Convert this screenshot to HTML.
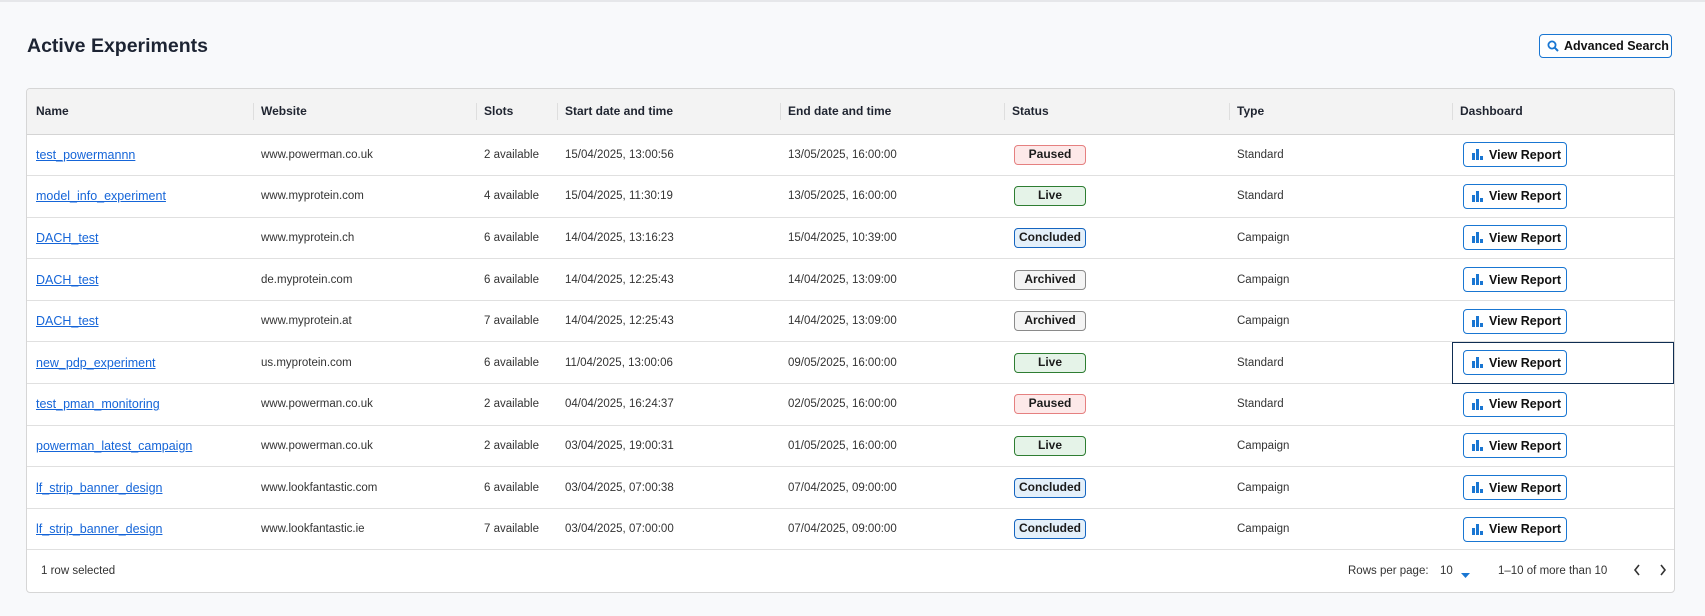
<!DOCTYPE html>
<html><head><meta charset="utf-8"><style>
*{box-sizing:border-box;margin:0;padding:0}
body{width:1705px;height:616px;background:#f8f9fb;font-family:"Liberation Sans",sans-serif;color:#1f2430;position:relative;overflow:hidden}
.topline{position:absolute;left:0;top:0;width:1705px;height:2px;background:#e6e7ea}
h1{position:absolute;left:27px;top:35px;font-size:19.5px;font-weight:600;color:#1d2433}
.adv{position:absolute;left:1539px;top:34px;width:133px;height:24px;border:1.5px solid #1976d2;border-radius:4px;background:#fff;font-size:12.5px;font-weight:bold;display:flex;align-items:center;padding-left:7px;gap:5px;color:#111;white-space:nowrap}
.card{position:absolute;left:26px;top:88px;width:1649px;height:505px;background:#fff;border:1px solid #d6d6d6;border-radius:4px;overflow:hidden}
table{border-collapse:collapse;table-layout:fixed;width:1647px}
th{height:45px;background:#f3f3f3;text-align:left;font-size:12px;font-weight:bold;padding-left:8px;position:relative;border-bottom:1px solid #d4d4d4;color:#1f2430}
th+th:before{content:"";position:absolute;left:0;top:14px;height:17px;width:1px;background:#dedede}
td{height:41.6px;font-size:11.5px;padding-left:8px;border-bottom:1px solid #e0e0e0;color:#333;white-space:nowrap}
th:first-child,td:first-child{padding-left:9px}
td a{color:#1565d8;text-decoration:underline;font-size:12.5px}
.b{display:inline-block;width:72px;height:20px;border-radius:4px;border:1.5px solid;text-align:center;font-weight:bold;font-size:12px;line-height:17px;color:#1b1b1b;margin-left:2px}
.p{background:#fde9e9;border-color:#e58080}
.l{background:#e5f3e8;border-color:#2e7d32}
.c{background:#e4f0fa;border-color:#1565c0}
.a{background:#f4f4f4;border-color:#8a8a8a}
.vr{display:inline-flex;align-items:center;gap:6px;width:104px;height:25px;border:1.5px solid #1976d2;border-radius:4px;padding-left:8px;font-size:12.5px;font-weight:bold;color:#111;margin-left:3px}
.sel{outline:1.5px solid #0f2d52;outline-offset:-1.5px}
.foot{position:absolute;left:0;top:461px;width:1647px;height:44px;font-size:11.5px;color:#333}
.foot span{position:absolute;top:15px}
</style></head><body>
<div class="topline"></div>
<h1>Active Experiments</h1>
<div class="adv"><svg width="12" height="12" viewBox="0 0 12 12"><circle cx="5" cy="5" r="3.6" fill="none" stroke="#1976d2" stroke-width="1.8"/><path d="M7.6 7.6L11 11" stroke="#1976d2" stroke-width="2"/></svg>Advanced Search</div>
<div class="card">
<table>
<colgroup><col style="width:226px"><col style="width:223px"><col style="width:81px"><col style="width:223px"><col style="width:224px"><col style="width:225px"><col style="width:223px"><col style="width:222px"></colgroup>
<tr><th>Name</th><th>Website</th><th>Slots</th><th>Start date and time</th><th>End date and time</th><th>Status</th><th>Type</th><th>Dashboard</th></tr>
<tr><td><a>test_powermannn</a></td><td>www.powerman.co.uk</td><td>2 available</td><td>15/04/2025, 13:00:56</td><td>13/05/2025, 16:00:00</td><td><span class="b p">Paused</span></td><td>Standard</td><td><span class="vr"><svg width="11" height="11"><rect x="0" y="4" width="3" height="7" fill="#1976d2"/><rect x="4" y="0" width="3" height="11" fill="#1976d2"/><rect x="8" y="7" width="3" height="4" fill="#1976d2"/></svg>View Report</span></td></tr>
<tr><td><a>model_info_experiment</a></td><td>www.myprotein.com</td><td>4 available</td><td>15/04/2025, 11:30:19</td><td>13/05/2025, 16:00:00</td><td><span class="b l">Live</span></td><td>Standard</td><td><span class="vr"><svg width="11" height="11"><rect x="0" y="4" width="3" height="7" fill="#1976d2"/><rect x="4" y="0" width="3" height="11" fill="#1976d2"/><rect x="8" y="7" width="3" height="4" fill="#1976d2"/></svg>View Report</span></td></tr>
<tr><td><a>DACH_test</a></td><td>www.myprotein.ch</td><td>6 available</td><td>14/04/2025, 13:16:23</td><td>15/04/2025, 10:39:00</td><td><span class="b c">Concluded</span></td><td>Campaign</td><td><span class="vr"><svg width="11" height="11"><rect x="0" y="4" width="3" height="7" fill="#1976d2"/><rect x="4" y="0" width="3" height="11" fill="#1976d2"/><rect x="8" y="7" width="3" height="4" fill="#1976d2"/></svg>View Report</span></td></tr>
<tr><td><a>DACH_test</a></td><td>de.myprotein.com</td><td>6 available</td><td>14/04/2025, 12:25:43</td><td>14/04/2025, 13:09:00</td><td><span class="b a">Archived</span></td><td>Campaign</td><td><span class="vr"><svg width="11" height="11"><rect x="0" y="4" width="3" height="7" fill="#1976d2"/><rect x="4" y="0" width="3" height="11" fill="#1976d2"/><rect x="8" y="7" width="3" height="4" fill="#1976d2"/></svg>View Report</span></td></tr>
<tr><td><a>DACH_test</a></td><td>www.myprotein.at</td><td>7 available</td><td>14/04/2025, 12:25:43</td><td>14/04/2025, 13:09:00</td><td><span class="b a">Archived</span></td><td>Campaign</td><td><span class="vr"><svg width="11" height="11"><rect x="0" y="4" width="3" height="7" fill="#1976d2"/><rect x="4" y="0" width="3" height="11" fill="#1976d2"/><rect x="8" y="7" width="3" height="4" fill="#1976d2"/></svg>View Report</span></td></tr>
<tr><td><a>new_pdp_experiment</a></td><td>us.myprotein.com</td><td>6 available</td><td>11/04/2025, 13:00:06</td><td>09/05/2025, 16:00:00</td><td><span class="b l">Live</span></td><td>Standard</td><td class="sel"><span class="vr"><svg width="11" height="11"><rect x="0" y="4" width="3" height="7" fill="#1976d2"/><rect x="4" y="0" width="3" height="11" fill="#1976d2"/><rect x="8" y="7" width="3" height="4" fill="#1976d2"/></svg>View Report</span></td></tr>
<tr><td><a>test_pman_monitoring</a></td><td>www.powerman.co.uk</td><td>2 available</td><td>04/04/2025, 16:24:37</td><td>02/05/2025, 16:00:00</td><td><span class="b p">Paused</span></td><td>Standard</td><td><span class="vr"><svg width="11" height="11"><rect x="0" y="4" width="3" height="7" fill="#1976d2"/><rect x="4" y="0" width="3" height="11" fill="#1976d2"/><rect x="8" y="7" width="3" height="4" fill="#1976d2"/></svg>View Report</span></td></tr>
<tr><td><a>powerman_latest_campaign</a></td><td>www.powerman.co.uk</td><td>2 available</td><td>03/04/2025, 19:00:31</td><td>01/05/2025, 16:00:00</td><td><span class="b l">Live</span></td><td>Campaign</td><td><span class="vr"><svg width="11" height="11"><rect x="0" y="4" width="3" height="7" fill="#1976d2"/><rect x="4" y="0" width="3" height="11" fill="#1976d2"/><rect x="8" y="7" width="3" height="4" fill="#1976d2"/></svg>View Report</span></td></tr>
<tr><td><a>lf_strip_banner_design</a></td><td>www.lookfantastic.com</td><td>6 available</td><td>03/04/2025, 07:00:38</td><td>07/04/2025, 09:00:00</td><td><span class="b c">Concluded</span></td><td>Campaign</td><td><span class="vr"><svg width="11" height="11"><rect x="0" y="4" width="3" height="7" fill="#1976d2"/><rect x="4" y="0" width="3" height="11" fill="#1976d2"/><rect x="8" y="7" width="3" height="4" fill="#1976d2"/></svg>View Report</span></td></tr>
<tr><td><a>lf_strip_banner_design</a></td><td>www.lookfantastic.ie</td><td>7 available</td><td>03/04/2025, 07:00:00</td><td>07/04/2025, 09:00:00</td><td><span class="b c">Concluded</span></td><td>Campaign</td><td><span class="vr"><svg width="11" height="11"><rect x="0" y="4" width="3" height="7" fill="#1976d2"/><rect x="4" y="0" width="3" height="11" fill="#1976d2"/><rect x="8" y="7" width="3" height="4" fill="#1976d2"/></svg>View Report</span></td></tr>
</table>
<div class="foot">
<span style="left:14px">1 row selected</span>
<span style="left:1321px">Rows per page:</span>
<span style="left:1413px">10</span>
<span style="left:1434px;top:20px"><svg width="10" height="6"><path d="M0 0H9L4.5 5Z" fill="#1976d2"/></svg></span>
<span style="left:1471px">1–10 of more than 10</span>
<span style="left:1606px;top:14px"><svg width="8" height="12"><path d="M6 1L2 6L6 11" fill="none" stroke="#333" stroke-width="1.6"/></svg></span>
<span style="left:1632px;top:14px"><svg width="8" height="12"><path d="M2 1L6 6L2 11" fill="none" stroke="#333" stroke-width="1.6"/></svg></span>
</div>
</div>
</body></html>
